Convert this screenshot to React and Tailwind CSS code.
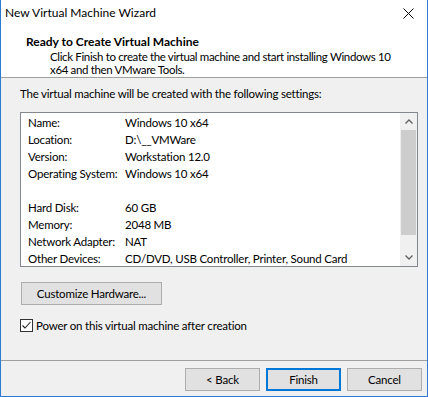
import React from 'react';

const rows = [
  ['Name:', 'Windows 10 x64'],
  ['Location:', 'D:\\__VMWare'],
  ['Version:', 'Workstation 12.0'],
  ['Operating System:', 'Windows 10 x64'],
  null,
  ['Hard Disk:', '60 GB'],
  ['Memory:', '2048 MB'],
  ['Network Adapter:', 'NAT'],
  ['Other Devices:', 'CD/DVD, USB Controller, Printer, Sound Card'],
];

function Button({ children, primary, className = '' }) {
  return (
    <button
      className={`h-[23px] bg-[#e1e1e1] text-[11.5px] tracking-[-0.2px] text-black ${
        primary ? 'border-2 border-[#0078d7]' : 'border border-[#adadad]'
      } ${className}`}
    >
      {children}
    </button>
  );
}

export default function App() {
  return (
    <div
      className="w-[428px] h-[397px] flex flex-col bg-[#f0f0f0] border-x border-b border-[#2b7bd3] text-[11.5px] tracking-[-0.2px] text-black overflow-hidden"
      style={{ fontFamily: 'Lato, "Noto Sans", sans-serif' }}
    >
      {/* Title bar */}
      <div className="h-[30px] shrink-0 bg-white flex items-center justify-between pl-[4px] pr-[13px]">
        <span className="text-[12px] tracking-normal leading-none -mt-[4px]">New Virtual Machine Wizard</span>
        <svg width="11" height="11" viewBox="0 0 11 11" className="-mt-[4px]">
          <path d="M0.5 0.5 L10.5 10.5 M10.5 0.5 L0.5 10.5" stroke="#000" strokeWidth="1" />
        </svg>
      </div>

      {/* Header */}
      <div className="h-[48px] shrink-0 bg-white border-b border-[#a0a0a0] pt-[4px]">
        <div className="pl-[25px] font-bold text-[12px] tracking-normal leading-[15px]">
          Ready to Create Virtual Machine
        </div>
        <div className="pl-[49px] pr-[10px] leading-[13px] mt-[1px] whitespace-nowrap tracking-[-0.35px]">
          Click Finish to create the virtual machine and start installing Windows 10
          <br />
          x64 and then VMware Tools.
        </div>
      </div>

      {/* Body */}
      <div className="flex-1 flex flex-col px-[19px]">
        <div className="mt-[8px] leading-[15px] whitespace-nowrap">
          The virtual machine will be created with the following settings:
        </div>

        <div className="mt-[11px] h-[155px] w-[398px] bg-white border border-[#828790] flex">
          <div className="flex-1 pt-[1px] pl-[7px]">
            {rows.map((r, i) =>
              r ? (
                <div key={i} className="flex h-[17px] items-center whitespace-nowrap">
                  <span className="w-[97px] shrink-0">{r[0]}</span>
                  <span>{r[1]}</span>
                </div>
              ) : (
                <div key={i} className="h-[17px]" />
              )
            )}
          </div>
          <div className="w-[17px] bg-[#f0f0f0] flex flex-col">
            <div className="h-[17px] flex items-center justify-center">
              <svg width="8" height="5" viewBox="0 0 8 5">
                <path d="M0.5 4.5 L4 1 L7.5 4.5" stroke="#606060" strokeWidth="1.3" fill="none" />
              </svg>
            </div>
            <div className="mx-[1px] h-[105px] bg-[#cdcdcd]" />
            <div className="flex-1 flex items-end justify-center pb-[6px]">
              <svg width="8" height="5" viewBox="0 0 8 5">
                <path d="M0.5 0.5 L4 4 L7.5 0.5" stroke="#606060" strokeWidth="1.3" fill="none" />
              </svg>
            </div>
          </div>
        </div>

        <Button className="mt-[15px] ml-[1px] w-[141px] h-[21px]">Customize Hardware...</Button>

        <label className="mt-[13px] flex items-center gap-[3px]">
          <span className="w-[13px] h-[13px] bg-white border border-[#333] flex items-center justify-center">
            <svg width="11" height="11" viewBox="0 0 11 11">
              <path d="M1.5 5.5 L4 8 L9.5 2" stroke="#222" strokeWidth="1.1" fill="none" />
            </svg>
          </span>
          <span className="leading-[15px]">Power on this virtual machine after creation</span>
        </label>
      </div>

      {/* Footer */}
      <div className="h-[36px] shrink-0 border-t border-[#a0a0a0] flex justify-end gap-[6px] pt-[7px] pr-[5px]">
        <Button className="w-[75px]">&lt; Back</Button>
        <Button primary className="w-[75px]">Finish</Button>
        <Button className="w-[75px]">Cancel</Button>
      </div>
    </div>
  );
}
